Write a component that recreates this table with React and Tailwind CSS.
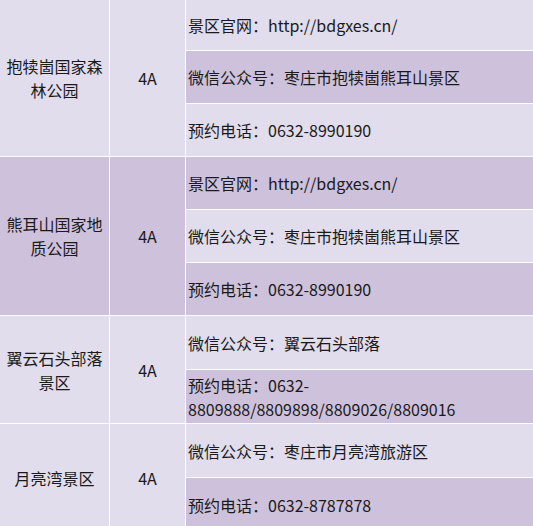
import React from "react";

const L = "bg-[#e1dded]";
const D = "bg-[#cdc1dc]";

const sections = [
  {
    name: ["抱犊崮国家森", "林公园"],
    bg: L,
    rows: [
      [L, "景区官网：http://bdgxes.cn/"],
      [D, "微信公众号：枣庄市抱犊崮熊耳山景区"],
      [L, "预约电话：0632-8990190"],
    ],
  },
  {
    name: ["熊耳山国家地", "质公园"],
    bg: D,
    rows: [
      [D, "景区官网：http://bdgxes.cn/"],
      [L, "微信公众号：枣庄市抱犊崮熊耳山景区"],
      [D, "预约电话：0632-8990190"],
    ],
  },
  {
    name: ["翼云石头部落", "景区"],
    bg: L,
    rows: [
      [L, "微信公众号：翼云石头部落"],
      [D, ["预约电话：0632-", "8809888/8809898/8809026/8809016"]],
    ],
  },
  {
    name: ["月亮湾景区"],
    bg: L,
    rows: [
      [L, "微信公众号：枣庄市月亮湾旅游区"],
      [D, "预约电话：0632-8787878"],
    ],
  },
];

const span = { 2: "row-span-2", 3: "row-span-3" };

export default function App() {
  return (
    <div
      className="w-[533px] h-[526px] overflow-hidden bg-white text-[16px] leading-6 text-[#1a1a1a]"
      style={{ fontFamily: '"Noto Sans CJK SC", "Noto Sans", sans-serif' }}
    >
      <div className="grid grid-cols-[109px_75px_1fr] grid-rows-[50px_52px_52px_52px_52px_52px_53px_53px_53px_53px] gap-px bg-white">
        {sections.map((s, i) => (
          <React.Fragment key={i}>
            <div className={`${span[s.rows.length]} ${s.bg} flex flex-col items-center justify-center text-center`}>
              {s.name.map((n, j) => (
                <div key={j}>{n}</div>
              ))}
            </div>
            <div className={`${span[s.rows.length]} ${s.bg} flex items-center justify-center`}>4A</div>
            {s.rows.map(([bg, t], j) => (
              <div key={j} className={`${bg} flex flex-col justify-center pl-[2px]`}>
                {Array.isArray(t) ? t.map((x, k) => <div key={k}>{x}</div>) : <div>{t}</div>}
              </div>
            ))}
          </React.Fragment>
        ))}
      </div>
    </div>
  );
}
